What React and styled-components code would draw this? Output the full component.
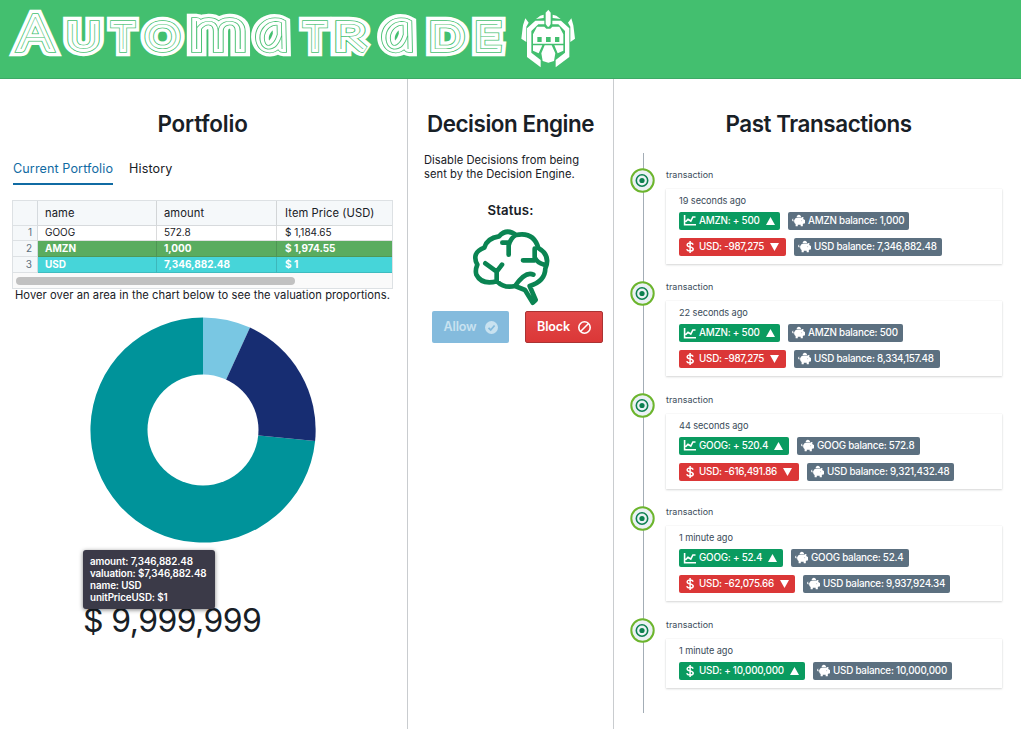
import React from "react";
import styled, { createGlobalStyle } from "styled-components";
import { FaPiggyBank } from "react-icons/fa";

const Global = createGlobalStyle`
  *{box-sizing:border-box}
  body{margin:0;background:#fff;color:#182026;font-family:Inter,"Liberation Sans",sans-serif;font-size:11px;}
  h2,p{margin:0}
`;
const Page = styled.div`width:1021px;height:729px;overflow:hidden;display:flex;flex-direction:column;background:#fff;`;
const Header = styled.header`height:79px;flex:none;background:#43bf6f;border-bottom:1px solid #3da966;display:flex;align-items:flex-start;z-index:1;`;
const Columns = styled.main`flex:1;display:grid;grid-template-columns:407px 206px 1fr;min-height:0;`;
const Column = styled.section`padding:31px 12px 0;display:flex;flex-direction:column;border-left:${p => p.$line ? "1px solid #c9cccf" : "0"};`;
const Title = styled.h2`font-size:22.4px;line-height:28px;margin-bottom:1px;font-weight:600;text-align:center;white-space:nowrap;letter-spacing:${p => p.$ls || -0.42}px;padding-left:${p => p.$pl || 0}px;padding-right:${p => p.$pr || 0}px;`;
const Tabs = styled.nav`display:flex;gap:16px;margin:20px 0 0 1px;`;
const Tab = styled.span`font-size:12.6px;letter-spacing:.1px;line-height:20px;height:26px;color:${p => p.$on ? "#106ba3" : "#182026"};border-bottom:${p => p.$on ? "2px solid #106ba3" : "0"};`;
const Table = styled.div`margin-top:15px;width:381px;height:89px;border:1px solid #dde1e4;display:flex;flex-direction:column;`;
const Row = styled.div`flex:none;display:grid;grid-template-columns:25px 119px 120px 1fr;height:${p => p.$head ? 25 : 16}px;line-height:${p => p.$head ? 24 : 15}px;font-size:${p => p.$head ? 11.2 : 10}px;letter-spacing:${p => p.$head ? 0.08 : 0}px;font-weight:${p => p.$bg ? 700 : 400};color:${p => p.$bg ? "#fff" : "#182026"};background:${p => p.$head ? "#f5f8fa" : p.$bg || "#fff"};&:nth-child(2){height:15px;line-height:13px}`;
const Cell = styled.span`padding-left:7px;border-right:1px solid rgba(16,22,26,.15);border-bottom:1px solid rgba(16,22,26,.13);&:last-child{border-right:0;padding-left:8px}`;
const Num = styled.span`text-align:right;padding-right:5px;background:#f5f8fa;color:#5c7080;font-weight:400;border-right:1px solid #d5dade;border-bottom:1px solid #dde1e4;`;
const ScrollTrack = styled.div`flex:1;background:#fafafa;padding:4px 3px 0;`;
const ScrollThumb = styled.div`width:279px;height:8px;border-radius:4px;background:#c1c1c1;`;
const Hint = styled.p`text-align:center;font-size:11.2px;letter-spacing:.04px;line-height:14px;margin-top:-1px;white-space:nowrap;width:381px;`;
const Donut = styled.svg`width:226px;height:226px;margin:15px 0 0 78px;flex:none;`;
const Worth = styled.div`position:relative;margin:59px 0 0 71px;font-size:32px;line-height:38px;letter-spacing:-.6px;`;
const Tip = styled.div`position:absolute;left:0;top:-52px;width:132px;height:59px;background:#3b3a48;color:#fff;border-radius:3px;padding:6px 7px;font-size:9.8px;line-height:12px;letter-spacing:-.1px;font-weight:600;white-space:nowrap;box-shadow:0 1px 4px rgba(0,0,0,.5);`;
const Note = styled.p`margin:14px 0 0 4px;font-size:11.2px;line-height:14px;white-space:nowrap;letter-spacing:.03px;`;
const Status = styled.p`margin-top:21px;font-size:13.2px;line-height:16px;letter-spacing:.15px;font-weight:600;text-align:center;`;
const Brain = styled.svg`width:90px;height:90px;margin:3.5px 0 0 45px;flex:none;`;
const Actions = styled.div`display:flex;gap:16px;margin:-.5px 0 0 12px;`;
const Button = styled.button`flex:none;font:600 12.6px/18px Inter,sans-serif;letter-spacing:-.15px;height:32px;width:${p => p.$w}px;display:flex;align-items:center;justify-content:center;gap:8px;padding:0;border-radius:2px;color:${p => p.$off ? "#c8e2f0" : "#fff"};background:${p => p.$off ? "#84bbdd" : "linear-gradient(#e24848,#db3737)"};border:${p => p.$off ? "0" : "1px solid #a33"};`;
const Timeline = styled.div`position:relative;margin:14px 0 0 17px;height:560px;border-left:1px solid #a3adb6;padding:15.9px 0 0 22px;`;
const Event = styled.article`position:relative;height:112.5px;`;
const Dot = styled.svg`position:absolute;left:-36px;top:-.5px;width:25px;height:25px;`;
const Kind = styled.div`font-size:8.9px;line-height:12px;color:#394b59;letter-spacing:.05px;`;
const Card = styled.div`margin-top:8px;width:336px;padding:7px 13px 8px;background:#fff;box-shadow:0 1px 2px rgba(16,22,26,.16),0 0 1px rgba(16,22,26,.1);`;
const When = styled.div`font-size:9.2px;line-height:10px;color:#394b59;letter-spacing:-.06px;`;
const Chips = styled.div`display:flex;gap:8px;margin-top:${p => p.$first ? 6 : 8}px;`;
const Chip = styled.span`height:18px;width:${p => p.$w}px;display:flex;align-items:center;gap:3px;padding-left:4px;border-radius:2px;background:${p => p.$c};color:#fff;font-size:9.8px;line-height:16px;letter-spacing:-.22px;font-weight:500;white-space:nowrap;svg{flex:none}`;
const Piggy = styled(FaPiggyBank)`margin-bottom:1px;`;
const Mark = styled.svg`flex:none;width:512px;height:78px;`;

/* inline lettering: alternating strokes around hairline letters */
const layers = [["#fff", 14.4], ["#43bf6f", 7.6], ["#fff", 6.1], ["#43bf6f", 0.1]];
/* letter, x, horizontal scale, font size */
const glyphs = [
  ["A", 19.5, 1.1, 45], ["U", 67.3, 1.25, 36], ["T", 113.3, 0.95, 36], ["O", 145.9, 1.17, 36], ["m", 189.6, 1.3, 56],
  ["a", 258.4, 1.16, 56], ["T", 305.3, 0.95, 36], ["R", 334.8, 1.4, 36], ["a", 384.4, 1.16, 56], ["D", 429.7, 1.23, 36], ["E", 475.5, 1.15, 36]];
const Wordmark = () => (
  <Mark>
    <defs><g id="wm" fontFamily="Lato" fontWeight="100">
      {glyphs.map(([c, x, f, s], i) => <text key={i} fontSize={s} fontStyle={c === "a" ? "italic" : "normal"} transform={`translate(${x} 49) scale(${f} 1)${c === "a" ? " skewX(8)" : ""}`}>{c}</text>)}
    </g></defs>
    {layers.map(([c, w], i) => <use key={i} href="#wm" fill={c} stroke={c} strokeWidth={w} strokeMiterlimit="2" />)}
  </Mark>
);
const RobotSvg = styled.svg`margin-left:3px;flex:none;`;
const Robot = () => (
  <RobotSvg width="70" height="75" viewBox="0 0 210 225" fill="#fff">
    <path d="M100 29L107 38V72L102 80H98L92 72V38Z" />
    <path d="M86 44V54L63 57 76 47ZM113 44V54L137 57 124 47Z" />
    <path d="M31 55L41 68 34 80V126L19 116 24 76ZM169 55L159 68 166 80V126L180 116 175 76Z" />
    <path d="M61 62H88V73H70L49 93V158L77 180V202L36 171V85ZM138 62H112V73H130L150 93V158L122 180V202L163 171V85Z" />
    <path d="M66 80H88L94 86H106L112 80H133L145 103H54ZM54 110H67V126H54ZM80 110H93V126H80ZM107 110H120V126H107ZM133 110H145V126H133ZM54 103H145V111H54ZM54 126H145V131H54ZM54 136H82L71 160 54 152ZM118 136H145V152L128 160ZM89 136H110L121 160 117 183 100 188 83 183 79 160Z" />
  </RobotSvg>
);
const ChartIcon = () => <svg width="13" height="11" viewBox="0 0 13 11" fill="none" stroke="#fff" strokeWidth="1.6"><path d="M1.6 0V9.7H13M2.6 6.8L5 4.3 7.8 6 9.9 2H12.5" /></svg>;
const Dollar = () => <svg width="13" height="12" viewBox="0 0 13 12" fill="none" stroke="#fff" strokeWidth="1.5"><path d="M10.2 3.6Q9.5 2 7.1 2 4.1 2 4.2 4 4.3 5.4 7.1 6 10.3 6.6 10.2 8.3 10 10 7.1 10 4.3 10 3.7 8.2M7.1 0V12" /></svg>;
const TriSvg = styled.svg`margin-left:3px;`;
const Tri = ({ up }) => <TriSvg width="9" height="8" viewBox="0 0 9 8" fill="#fff"><path d={up ? "M4.5 0L9 8H0Z" : "M0 0H9L4.5 8Z"} /></TriSvg>;

const tx = [
  ["19 seconds ago", [["AMZN", "+ 500", 101, "1,000", 121], ["USD", "-987,275", 107, "7,346,882.48", 148]]],
  ["22 seconds ago", [["AMZN", "+ 500", 101, "500", 115], ["USD", "-987,275", 107, "8,334,157.48", 146]]],
  ["44 seconds ago", [["GOOG", "+ 520.4", 110, "572.8", 123], ["USD", "-616,491.86", 120, "9,321,432.48", 147]]],
  ["1 minute ago", [["GOOG", "+ 52.4", 104, "52.4", 118], ["USD", "-62,075.66", 116, "9,937,924.34", 147]]],
  ["1 minute ago", [["USD", "+ 10,000,000", 126, "10,000,000", 139]]],
];

export default function App() {
  return (
    <Page>
      <Global />
      <Header><Wordmark /><Robot /></Header>
      <Columns>
        <Column>
          <Title $ls={-0.15} $pr={2}>Portfolio</Title>
          <Tabs><Tab $on>Current Portfolio</Tab><Tab>History</Tab></Tabs>
          <Table>
            <Row $head><Num /><Cell>name</Cell><Cell>amount</Cell><Cell>Item Price (USD)</Cell></Row>
            <Row><Num>1</Num><Cell>GOOG</Cell><Cell>572.8</Cell><Cell>$ 1,184.65</Cell></Row>
            <Row $bg="#5aac5f"><Num>2</Num><Cell>AMZN</Cell><Cell>1,000</Cell><Cell>$ 1,974.55</Cell></Row>
            <Row $bg="#46d5d9"><Num>3</Num><Cell>USD</Cell><Cell>7,346,882.48</Cell><Cell>$ 1</Cell></Row>
            <ScrollTrack><ScrollThumb /></ScrollTrack>
          </Table>
          <Hint>Hover over an area in the chart below to see the valuation proportions.</Hint>
          <Donut viewBox="-113 -113 226 226">
            <path fill="#00939a" d="M0 0L112.1 11A112.6 112.6 0 1 1 0 -112.6Z" />
            <path fill="#79c7e3" d="M0 0V-112.6A112.6 112.6 0 0 1 47 -102.4Z" />
            <path fill="#172d72" d="M0 0L47 -102.4A112.6 112.6 0 0 1 112.1 11Z" />
            <circle r="55.5" fill="#fff" />
          </Donut>
          <Worth>$ 9,999,999<Tip>amount: 7,346,882.48<br />valuation: $7,346,882.48<br />name: USD<br />unitPriceUSD: $1</Tip></Worth>
        </Column>
        <Column $line>
          <Title>Decision Engine</Title>
          <Note>Disable Decisions from being<br />sent by the Decision Engine.</Note>
          <Status>Status:</Status>
          <Brain viewBox="0 0 270 270" fill="none" stroke="#0a8452" strokeWidth="14" strokeLinecap="round" strokeLinejoin="round">
            <path d="M58 77Q66 48 102 43Q125 18 153 39Q206 28 220 78Q258 100 241 140Q240 178 194 192L212 234 203 242 180 204 150 192Q118 200 96 178Q50 190 34 158Q30 145 37 128Q18 92 58 77ZM112 62H130M131 98V70Q138 46 153 39M61 124L95 149V178M95 149L111 128M209 80V106Q216 122 238 128M174 115H209M150 192Q182 146 205 158" />
          </Brain>
          <Actions>
            <Button $off $w={77}>Allow<svg width="13" height="13" viewBox="0 0 13 13"><circle cx="6.5" cy="6.5" r="6.5" fill="#c8e2f0" /><path d="M3.5 6.8L5.7 9 9.6 4.5" fill="none" stroke="#84bbdd" strokeWidth="1.8" /></svg></Button>
            <Button $w={78}>Block<svg width="13" height="13" viewBox="0 0 13 13" fill="none" stroke="#fff" strokeWidth="1.6"><circle cx="6.5" cy="6.5" r="5.7" /><path d="M2.5 10.5L10.5 2.5" /></svg></Button>
          </Actions>
        </Column>
        <Column $line>
          <Title $pl={2}>Past Transactions</Title>
          <Timeline>
            {tx.map(([when, rows], i) => (
              <Event key={i}>
                <Dot viewBox="0 0 25 25"><circle cx="12.5" cy="12.5" r="11.2" fill="#ebf1f5" stroke="#6cb52d" strokeWidth="2" /><circle cx="12" cy="12.5" r="5.7" fill="none" stroke="#0d8050" strokeWidth="1.6" /><circle cx="12" cy="12.5" r="2.6" fill="#0d8050" /></Dot>
                <Kind>transaction</Kind>
                <Card>
                  <When>{when}</When>
                  {rows.map(([n, d, w, b, bw], j) => (
                    <Chips key={j} $first={j === 0}>
                      <Chip $w={w} $c={d[0] === "+" ? "#0a9b60" : "#db3737"}>{n === "USD" ? <Dollar /> : <ChartIcon />}<span>{n}: {d}</span><Tri up={d[0] === "+"} /></Chip>
                      <Chip $w={bw} $c="#5c7080"><Piggy size={13} /><span>{n} balance: {b}</span></Chip>
                    </Chips>
                  ))}
                </Card>
              </Event>
            ))}
          </Timeline>
        </Column>
      </Columns>
    </Page>
  );
}
